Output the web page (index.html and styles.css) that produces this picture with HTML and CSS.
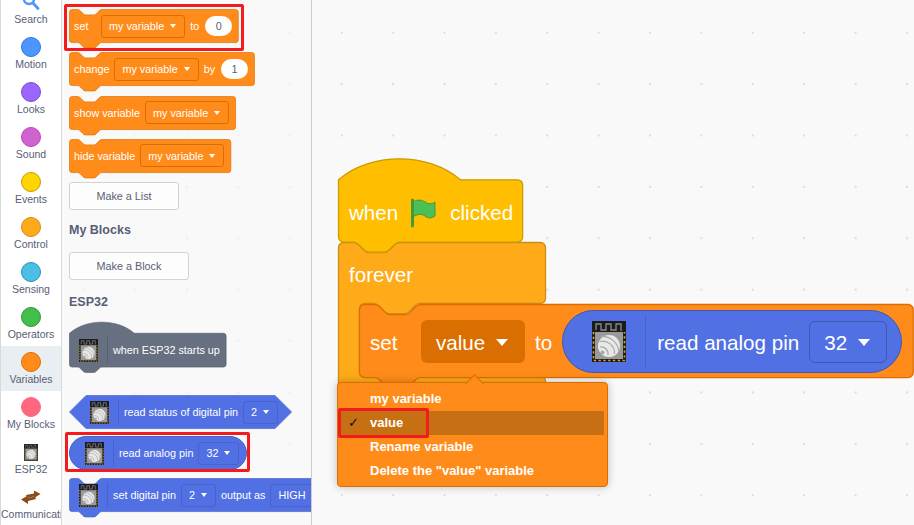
FILE: index.html
```html
<html>
	<head>
		<title>Blocks editor</title>
		<link rel="stylesheet" href="styles.css">
	</head>
	<body>
		<svg class="defs" width="0" height="0">
			<symbol id="esp" viewBox="0 0 34 41">
				<rect width="34" height="41" fill="#1c1c1c"/>
				<path d="M4 9V3h5v6h5V3h5v6h5V3h5v7" fill="none" stroke="#8c8c8c" stroke-width="1.3"/>
				<path d="M1.500 11V39.500H32.500V11" fill="none" stroke="#e0a820" stroke-width="1.6" stroke-dasharray="2.2 2.6"/>
				<rect x="3" y="11" width="28" height="27" fill="#9a9a9a"/>
				<circle cx="17" cy="25" r="11" fill="#e8e8e8"/>
				<path d="M7.500 20.500a12 12 0 0 1 15 12.500M9 15.500a17 17 0 0 1 18 15M8 26a7 7 0 0 1 8 8" fill="none" stroke="#a8a8a8" stroke-width="1.200"/>
				<circle cx="10.500" cy="31.500" r="2" fill="#a8a8a8"/>
			</symbol>
		</svg>

		<div class="editor">
			<nav class="sidebar">
				<ul class="menu-list">
					<li class="cat">
						<svg class="cat-icon" width="20" height="20" viewBox="0 0 20 20"><circle cx="8" cy="7" r="5" fill="none" stroke="#4c97ff" stroke-width="2.500"/><path d="M12 11l5 5.500" stroke="#4c97ff" stroke-width="2.800" stroke-linecap="round"/></svg>
						<span class="cat-name">Search</span>
					</li>
					<li class="cat"><i class="dot motion"></i><span class="cat-name">Motion</span></li>
					<li class="cat"><i class="dot looks"></i><span class="cat-name">Looks</span></li>
					<li class="cat"><i class="dot sound"></i><span class="cat-name">Sound</span></li>
					<li class="cat"><i class="dot events"></i><span class="cat-name">Events</span></li>
					<li class="cat"><i class="dot control"></i><span class="cat-name">Control</span></li>
					<li class="cat"><i class="dot sensing"></i><span class="cat-name">Sensing</span></li>
					<li class="cat"><i class="dot operators"></i><span class="cat-name">Operators</span></li>
					<li class="cat active"><i class="dot variables"></i><span class="cat-name">Variables</span></li>
					<li class="cat"><i class="dot myblocks"></i><span class="cat-name">My Blocks</span></li>
					<li class="cat">
						<svg class="cat-icon" width="20" height="20" viewBox="-3 0 20 20"><use href="#esp" x="0" y="2" width="14" height="17"/></svg>
						<span class="cat-name">ESP32</span>
					</li>
					<li class="cat">
						<svg class="cat-icon" width="20" height="20" viewBox="0 0 20 20"><path d="M5 8l8-1.500V3.500L19.500 7 13 11V9.500L6 11zM0 12.500l7-4V11l7-1.500 1 2.500-8 2v3z" fill="#8f4a1c"/></svg>
						<span class="cat-name">Communications</span>
					</li>
				</ul>
			</nav>

			<section class="palette">
				<div class="block var marked mark-set">
					<svg width="170" height="39"><g transform="translate(.5 .5) scale(.675)"><path d="M0 4a4 4 0 0 1 4-4h8c2 0 3 1 4 2l4 4c1 1 2 2 4 2h12c2 0 3-1 4-2l4-4c1-1 2-2 4-2H246a4 4 0 0 1 4 4V45a4 4 0 0 1-4 4H48c-2 0-3 1-4 2l-4 4c-1 1-2 2-4 2H24c-2 0-3-1-4-2l-4-4c-1-1-2-2-4-2H4a4 4 0 0 1-4-4z"/></g></svg>
					<div class="row"><span class="set-word">set</span><span class="dd">my variable<i class="arrow"></i></span><span>to</span><span class="num">0</span></div>
				</div>
				<div class="block var">
					<svg width="186" height="39"><g transform="translate(.5 .5) scale(.675)"><path d="M0 4a4 4 0 0 1 4-4h8c2 0 3 1 4 2l4 4c1 1 2 2 4 2h12c2 0 3-1 4-2l4-4c1-1 2-2 4-2H270a4 4 0 0 1 4 4V45a4 4 0 0 1-4 4H48c-2 0-3 1-4 2l-4 4c-1 1-2 2-4 2H24c-2 0-3-1-4-2l-4-4c-1-1-2-2-4-2H4a4 4 0 0 1-4-4z"/></g></svg>
					<div class="row"><span>change</span><span class="dd">my variable<i class="arrow"></i></span><span>by</span><span class="num">1</span></div>
				</div>
				<div class="block var">
					<svg width="167" height="39"><g transform="translate(.5 .5) scale(.675)"><path d="M0 4a4 4 0 0 1 4-4h8c2 0 3 1 4 2l4 4c1 1 2 2 4 2h12c2 0 3-1 4-2l4-4c1-1 2-2 4-2H242a4 4 0 0 1 4 4V45a4 4 0 0 1-4 4H48c-2 0-3 1-4 2l-4 4c-1 1-2 2-4 2H24c-2 0-3-1-4-2l-4-4c-1-1-2-2-4-2H4a4 4 0 0 1-4-4z"/></g></svg>
					<div class="row"><span>show variable</span><span class="dd">my variable<i class="arrow"></i></span></div>
				</div>
				<div class="block var">
					<svg width="162" height="39"><g transform="translate(.5 .5) scale(.675)"><path d="M0 4a4 4 0 0 1 4-4h8c2 0 3 1 4 2l4 4c1 1 2 2 4 2h12c2 0 3-1 4-2l4-4c1-1 2-2 4-2H235a4 4 0 0 1 4 4V45a4 4 0 0 1-4 4H48c-2 0-3 1-4 2l-4 4c-1 1-2 2-4 2H24c-2 0-3-1-4-2l-4-4c-1-1-2-2-4-2H4a4 4 0 0 1-4-4z"/></g></svg>
					<div class="row"><span>hide variable</span><span class="dd">my variable<i class="arrow"></i></span></div>
				</div>

				<button class="make-btn list-btn">Make a List</button>
				<h3 class="heading">My Blocks</h3>
				<button class="make-btn block-btn">Make a Block</button>
				<h3 class="heading">ESP32</h3>

				<div class="block esp-hat">
					<svg width="158" height="51"><g transform="translate(.5 .5) scale(.675)"><path d="M0 16c25-22 71-22 96 0H228a4 4 0 0 1 4 4V62a4 4 0 0 1-4 4H48c-2 0-3 1-4 2l-4 4c-1 1-2 2-4 2H24c-2 0-3-1-4-2l-4-4c-1-1-2-2-4-2H4a4 4 0 0 1-4-4z"/></g></svg>
					<div class="row hat-row"><svg class="chip"><use href="#esp"/></svg><i class="sep"></i><span>when ESP32 starts up</span></div>
				</div>
				<div class="block ext bool">
					<svg width="223" height="34"><g transform="translate(.5 .5) scale(.675)"><path d="M24.500 0H304.500L329 24.500 304.500 49H24.500L0 24.500z"/></g></svg>
					<div class="row bool-row"><svg class="chip"><use href="#esp"/></svg><i class="sep"></i><span>read status of digital pin</span><span class="dd">2<i class="arrow"></i></span></div>
				</div>
				<div class="reporter marked mark-read">
					<svg class="chip"><use href="#esp"/></svg><i class="sep"></i><span>read analog pin</span><span class="dd">32<i class="arrow"></i></span>
				</div>
				<div class="block ext">
					<svg width="401" height="39"><g transform="translate(.5 .5) scale(.675)"><path d="M0 4a4 4 0 0 1 4-4h8c2 0 3 1 4 2l4 4c1 1 2 2 4 2h12c2 0 3-1 4-2l4-4c1-1 2-2 4-2H396a4 4 0 0 1 4 4V45a4 4 0 0 1-4 4H48c-2 0-3 1-4 2l-4 4c-1 1-2 2-4 2H24c-2 0-3-1-4-2l-4-4c-1-1-2-2-4-2H4a4 4 0 0 1-4-4z"/></g></svg>
					<div class="row stack-row"><svg class="chip"><use href="#esp"/></svg><i class="sep"></i><span>set digital pin</span><span class="dd">2<i class="arrow"></i></span><span>output as</span><span class="dd">HIGH</span></div>
				</div>
			</section>

			<main class="workspace">
				<!-- forever goes first so the hat and set blocks overlap it -->
				<svg class="ws-svg forever-svg" width="210" height="200"><g transform="translate(.5 .5) scale(1.27)"><path d="M0 4a4 4 0 0 1 4-4h8c2 0 3 1 4 2l4 4c1 1 2 2 4 2h12c2 0 3-1 4-2l4-4c1-1 2-2 4-2H159a4 4 0 0 1 4 4V44a4 4 0 0 1-4 4H64c-2 0-3 1-4 2l-4 4c-1 1-2 2-4 2H40c-2 0-3-1-4-2l-4-4c-1-1-2-2-4-2H20.500a4 4 0 0 0-4 4V101.500a4 4 0 0 0 4 4H159a4 4 0 0 1 4 4V140a4 4 0 0 1-4 4H4a4 4 0 0 1-4-4z"/></g></svg>
				<span class="ws-text forever-text">forever</span>

				<div class="when-block">
					<svg width="187" height="95"><g transform="translate(.5 .5) scale(1.27)"><path d="M0 16c25-22 71-22 96 0H141a4 4 0 0 1 4 4V61a4 4 0 0 1-4 4H48c-2 0-3 1-4 2l-4 4c-1 1-2 2-4 2H24c-2 0-3-1-4-2l-4-4c-1-1-2-2-4-2H4a4 4 0 0 1-4-4z"/></g></svg>
					<div class="when-row">
						<span>when</span>
						<svg class="flag" width="26" height="28" viewBox="0 0 26 28"><path d="M2 3c5-3 9-2 12 0s7 2.500 10 0V17c-3 2.500-7 2.500-10 0s-8-2-12 1z" fill="#4cbf56" stroke="#45993d"/><path d="M1.500 1V27" stroke="#45993d" stroke-width="3" stroke-linecap="round"/></svg>
						<span>clicked</span>
					</div>
				</div>

				<div class="set-block">
					<svg width="556" height="85"><g transform="translate(.5 .5) scale(1.27)"><path d="M0 4a4 4 0 0 1 4-4h8c2 0 3 1 4 2l4 4c1 1 2 2 4 2h12c2 0 3-1 4-2l4-4c1-1 2-2 4-2H432a4 4 0 0 1 4 4V53.500a4 4 0 0 1-4 4H48c-2 0-3 1-4 2l-4 4c-1 1-2 2-4 2H24c-2 0-3-1-4-2l-4-4c-1-1-2-2-4-2H4a4 4 0 0 1-4-4z"/></g></svg>
					<div class="set-row">
						<span class="set-label">set</span>
						<span class="value-dd">value<i class="arrow big"></i></span>
						<span>to</span>
						<div class="big-reporter">
							<svg class="big-chip"><use href="#esp"/></svg><i class="big-sep"></i><span>read analog pin</span>
							<span class="pin-dd">32<i class="arrow big"></i></span>
						</div>
					</div>
				</div>

				<div class="dropdown-menu">
					<i class="menu-tip"></i>
					<div class="menu-row"><span class="check"></span>my variable</div>
					<div class="menu-row selected"><span class="check">✓</span>value</div>
					<div class="menu-row"><span class="check"></span>Rename variable</div>
					<div class="menu-row"><span class="check"></span>Delete the "value" variable</div>
				</div>
			</main>
		</div>
	</body>
</html>
```

FILE: styles.css
```css
html, body {
	margin: 0;
	padding: 0;
	overflow: hidden;
}
body {
	width: 914px;
	height: 525px;
	font-family: "Liberation Sans", Arial, sans-serif;
}
.defs {
	display: block;
	height: 0;
}
.editor {
	display: flex;
	height: 525px;
	overflow: hidden;
}

/* category column */
.sidebar {
	width: 60px;
	flex: none;
	background: #fff;
	border-left: 1px solid #d9d9d9;
	border-right: 1px solid #d9d9d9;
	overflow: hidden;
}
.menu-list {
	list-style: none;
	margin: -14px 0 0 0;
	padding: 0;
}
.cat {
	height: 45px;
	box-sizing: border-box;
	padding-top: 6px;
	color: #575e75;
	font-size: 10.5px;
}
.cat.active {
	background: #e9eef2;
}
.dot, .cat-icon {
	display: block;
	width: 20px;
	height: 20px;
	box-sizing: border-box;
	margin: 0 auto 1px;
	border-radius: 50%;
	border: 1px solid;
}
.cat-icon {
	border: none;
	border-radius: 0;
	overflow: visible;
}
.cat-name {
	display: block;
	line-height: 12px;
	text-align: center;
	white-space: nowrap;
}
.motion { background: #4c97ff; border-color: #3373cc; }
.looks { background: #9966ff; border-color: #774dcb; }
.sound { background: #cf63cf; border-color: #bd42bd; }
.events { background: #ffd500; border-color: #cc9900; }
.control { background: #ffab19; border-color: #cf8b17; }
.sensing { background: #4cbfe6; border-color: #2e8eb8; }
.operators { background: #40bf4a; border-color: #389438; }
.variables { background: #ff8c1a; border-color: #db6e00; }
.myblocks { background: #ff6680; border-color: #ff6680; }

/* palette */
.palette {
	width: 242px;
	flex: none;
	padding: 9px 0 0 7px;
	background-color: #f9f9f9;
	background-image: radial-gradient(circle, #f1f1f1 1.5px, transparent 1.6px);
	background-size: 51.4px 51.4px;
	background-position: 202px 7px;
	border-right: 1px solid #ccc;
	overflow: hidden;
	color: #fff;
	font-size: 10.8px;
}
.block {
	display: grid;
	justify-items: start;
	margin-bottom: 4.33px;
	width: max-content;
	position: relative;
}
.block > svg, .block > .row {
	grid-area: 1 / 1;
}
.block > svg {
	overflow: visible;
}
.var path {
	fill: #ff8c1a;
	stroke: #db6e00;
}
.ext path {
	fill: #5170e3;
	stroke: #4a62c9;
}
.esp-hat path {
	fill: #667080;
	stroke: #565f6e;
}
.row {
	display: flex;
	align-items: center;
	align-self: start;
	gap: 5px;
	height: 34px;
	padding-left: 5px;
	white-space: nowrap;
}
.set-word {
	width: 22px;
}
.dd {
	display: inline-flex;
	align-items: center;
	box-sizing: border-box;
	height: 23px;
	padding: 0 8px 0 7px;
	border: 1px solid #db6e00;
	border-radius: 3px;
}
.arrow {
	width: 0;
	height: 0;
	margin-left: 6px;
	border: 3.2px solid transparent;
	border-top: 4px solid #fff;
	border-bottom: none;
}
.arrow.big {
	margin-left: 11px;
	border-width: 7px 6.5px 0;
	border-style: solid;
	border-color: #fff transparent transparent;
}
.num {
	width: 27px;
	height: 20px;
	margin-left: 1px;
	border-radius: 10px;
	background: #fff;
	color: #575e75;
	text-align: center;
	line-height: 20px;
}

.make-btn {
	display: block;
	height: 28px;
	padding: 0;
	box-sizing: border-box;
	border: 1px solid #d3d3d3;
	border-radius: 3px;
	background: #fdfdfd;
	color: #575e75;
	font-family: inherit;
	font-size: 10.8px;
}
.list-btn { width: 110px; }
.block-btn { width: 120px; }
.heading {
	margin: 12px 0 14px;
	color: #575e75;
	font-size: 12.5px;
	line-height: 16px;
}
.block-btn + .heading {
	margin: 14px 0 12px;
}

.chip {
	width: 19px;
	height: 23px;
	flex: none;
}
.sep {
	width: 1px;
	height: 26px;
	margin-left: 4px;
	flex: none;
	background: #4a62c9;
}
.esp-hat {
	margin-bottom: 22px;
}
.esp-hat .sep {
	background: #565f6e;
}
.hat-row {
	margin-top: 11px;
	padding-left: 10px;
}
.bool {
	margin-bottom: 7px;
}
.bool-row {
	padding-left: 21px;
}
.stack-row {
	padding-left: 10px;
}
.ext .dd, .reporter .dd {
	border-color: #4a62c9;
}
.reporter {
	display: flex;
	align-items: center;
	gap: 5px;
	width: max-content;
	box-sizing: border-box;
	height: 34px;
	margin-bottom: 8px;
	padding: 0 7px 0 15px;
	border: 1px solid #4a62c9;
	border-radius: 17px;
	background: #5170e3;
	position: relative;
	white-space: nowrap;
}
.marked::after {
	content: "";
	position: absolute;
	box-sizing: border-box;
	border: 3px solid #f21c1c;
	border-radius: 2px;
}
.mark-set::after {
	inset: -5px -5px -3px -5px;
}
.mark-read::after {
	inset: -5px -4px -3px -5.5px;
}

/* workspace */
.workspace {
	flex: 1;
	position: relative;
	background-color: #f9f9f9;
	background-image: radial-gradient(circle, #dcdcdc 1.2px, transparent 1.5px);
	background-size: 51.4px 51.4px;
	background-position: 4px 7px;
	color: #fff;
	font-size: 20.6px;
	overflow: hidden;
}
.ws-svg {
	position: absolute;
	overflow: visible;
}
.forever-svg {
	left: 26px;
	top: 242px;
}
.forever-svg path {
	fill: #ffab19;
	stroke: #cf8b17;
}
.forever-text {
	position: absolute;
	left: 37px;
	top: 263px;
}
.when-block {
	position: absolute;
	left: 26px;
	top: 159px;
	display: grid;
}
.when-block > * {
	grid-area: 1 / 1;
}
.when-block svg {
	overflow: visible;
}
.when-block path {
	fill: #ffbf00;
	stroke: #cc9900;
}
.when-block .flag path:first-child {
	fill: #4cbf56;
	stroke: #45993d;
}
.when-block .flag path:last-child {
	fill: none;
	stroke: #45993d;
}
.when-row {
	display: flex;
	align-items: center;
	align-self: start;
	gap: 13px;
	height: 62px;
	margin-top: 23px;
	padding-left: 11px;
}
.set-block {
	position: absolute;
	left: 47px;
	top: 304px;
	display: grid;
}
.set-block > * {
	grid-area: 1 / 1;
}
.set-block > svg {
	overflow: visible;
}
.set-block > svg path {
	fill: #ff8c1a;
	stroke: #db6e00;
}
.set-row {
	display: flex;
	align-items: center;
	align-self: start;
	height: 75px;
	padding-left: 11px;
	white-space: nowrap;
}
/* text sits a pixel under the middle of these rows */
.set-row span {
	padding-top: 2px;
}
.set-label {
	width: 51px;
}
.value-dd {
	display: flex;
	align-items: center;
	box-sizing: border-box;
	width: 104px;
	height: 43px;
	padding-left: 15px;
	margin-right: 10px;
	border-radius: 6px;
	background: #db6e00;
}
.big-reporter {
	display: flex;
	align-items: center;
	box-sizing: border-box;
	width: 340px;
	height: 63px;
	margin-left: 10px;
	padding-left: 29px;
	border: 1px solid #3f56b5;
	border-radius: 32px;
	background: #5170e3;
}
.big-chip {
	width: 34px;
	height: 41px;
	flex: none;
}
.big-sep {
	width: 1px;
	height: 53px;
	margin: 0 11px 0 19px;
	flex: none;
	background: #4a62c9;
}
.pin-dd {
	display: flex;
	align-items: center;
	box-sizing: border-box;
	width: 78px;
	height: 42px;
	margin-left: 10px;
	padding-left: 14px;
	border: 1px solid #3f56b5;
	border-radius: 6px;
}

/* variable dropdown */
.dropdown-menu {
	position: absolute;
	left: 25px;
	top: 382px;
	width: 271px;
	box-sizing: border-box;
	padding: 4px 3px 3px;
	border: 1px solid #db6e00;
	border-radius: 4px;
	background: #ff8c1a;
	box-shadow: 0 0 8px rgba(0, 0, 0, .25);
	font-size: 13px;
	font-weight: bold;
}
.menu-tip {
	position: absolute;
	left: 130px;
	top: -6px;
	width: 12px;
	height: 12px;
	background: #ff8c1a;
	border: 1px solid #db6e00;
	border-right: none;
	border-bottom: none;
	transform: rotate(45deg);
}
.menu-row {
	display: flex;
	align-items: center;
	position: relative;
	height: 24px;
	padding-bottom: 2px;
	box-sizing: border-box;
}
.check {
	width: 29px;
	padding-left: 7px;
	box-sizing: border-box;
	color: #111;
	font-family: "DejaVu Sans", sans-serif;
	font-weight: normal;
	font-size: 13px;
}
.selected {
	background: #c76f13;
}
.selected::after {
	content: "";
	position: absolute;
	left: -3px;
	top: -3px;
	width: 91px;
	height: 30px;
	box-sizing: border-box;
	border: 3px solid #f21c1c;
	border-radius: 2px;
}
```
